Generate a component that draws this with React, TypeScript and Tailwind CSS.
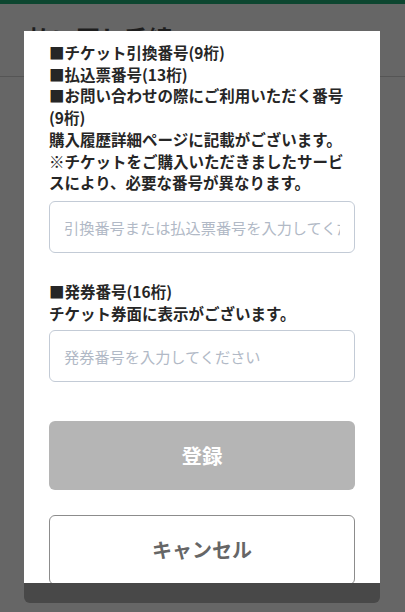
import React from "react";

const notes = [
  "■チケット引換番号(9桁)",
  "■払込票番号(13桁)",
  "■お問い合わせの際にご利用いただく番号(9桁)",
  "購入履歴詳細ページに記載がございます。",
  "※チケットをご購入いただきましたサービスにより、必要な番号が異なります。",
];

export default function App() {
  return (
    <div className="relative h-[612px] w-full overflow-hidden bg-[#666666] font-['Noto_Sans_CJK_JP','Noto_Sans',sans-serif]">
      {/* page behind the dialog */}
      <div className="h-[4px] bg-[#0d4630]" />
      <header className="h-[73px] border-b border-[#555555] px-[28px] pt-[22px]">
        <h1 className="text-[24px] font-bold leading-none text-[#1e1e1e]">払い戻し手続</h1>
      </header>

      {/* dialog */}
      <div className="absolute left-[24px] top-[31px] flex w-[356px] flex-col">
        <div className="h-[552px] overflow-hidden bg-white px-[25px] pt-[11px]">
          <div className="text-[15.5px] font-bold leading-[21.7px] text-[#262626]">
            {notes.map((line) => (
              <p key={line}>{line}</p>
            ))}
          </div>
          <input
            type="text"
            placeholder="引換番号または払込票番号を入力してください"
            className="mt-[7px] h-[52px] w-full rounded-[6px] border border-[#c3cbd6] bg-white px-[14px] text-[15.2px] text-[#333] outline-none placeholder:text-[#b1b9c6]"
          />

          <div className="mt-[28px] text-[15.5px] font-bold leading-[21.7px] text-[#262626]">
            <p>■発券番号(16桁)</p>
            <p>チケット券面に表示がございます。</p>
          </div>
          <input
            type="text"
            placeholder="発券番号を入力してください"
            className="mt-[6px] h-[52px] w-full rounded-[6px] border border-[#c3cbd6] bg-white px-[14px] text-[15.2px] text-[#333] outline-none placeholder:text-[#b1b9c6]"
          />

          <button
            type="button"
            className="mt-[39px] flex h-[69px] w-full items-center justify-center rounded-[6px] bg-[#b5b5b5] text-[20.5px] font-bold text-white"
          >
            登録
          </button>
          <button
            type="button"
            className="mt-[25px] flex h-[70px] w-full items-center justify-center rounded-[6px] border border-[#8c8c8c] bg-white text-[20px] font-bold text-[#666666]"
          >
            キャンセル
          </button>
        </div>
        <div className="h-[20px] rounded-b-[6px] bg-[#484848]" />
      </div>
    </div>
  );
}
